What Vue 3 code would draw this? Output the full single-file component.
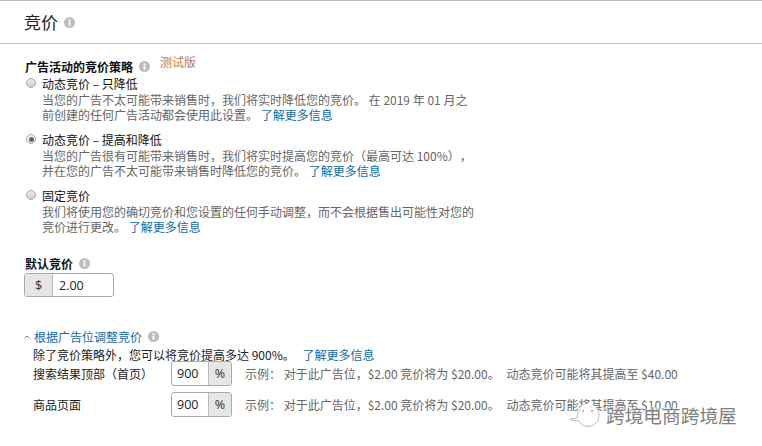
<script setup>
const strategies = [
  { id: 'a', title: '动态竞价 – 只降低', on: false, l1: '当您的广告不太可能带来销售时，我们将实时降低您的竞价。 在 2019 年 01 月之', l2: '前创建的任何广告活动都会使用此设置。' },
  { id: 'b', title: '动态竞价 – 提高和降低', on: true, l1: '当您的广告很有可能带来销售时，我们将实时提高您的竞价（最高可达 100%），', l2: '并在您的广告不太可能带来销售时降低您的竞价。' },
  { id: 'c', title: '固定竞价', on: false, l1: '我们将使用您的确切竞价和您设置的任何手动调整，而不会根据售出可能性对您的', l2: '竞价进行更改。' }
]
const rows = [
  { name: '搜索结果顶部（首页）', max: '$40.00' },
  { name: '商品页面', max: '$10.00' }
]
</script>

<template>
  <div class="page">
    <header class="head">
      <h1>竞价</h1>
      <svg class="info" viewBox="0 0 12 12"><circle cx="6" cy="6" r="6" /><rect x="5" y="5" width="2" height="4.5" fill="#fff" /><rect x="5" y="2.5" width="2" height="1.8" fill="#fff" /></svg>
    </header>

    <section class="main">
      <div class="strategy-title">
        <strong>广告活动的竞价策略</strong>
        <svg class="info" viewBox="0 0 12 12"><circle cx="6" cy="6" r="6" /><rect x="5" y="5" width="2" height="4.5" fill="#fff" /><rect x="5" y="2.5" width="2" height="1.8" fill="#fff" /></svg>
        <span class="beta">测试版</span>
      </div>

      <div v-for="s in strategies" :key="s.id" class="strategy">
        <span class="radio" :class="{ on: s.on }"></span>
        <div class="body">
          <div class="title">{{ s.title }}</div>
          <div class="desc">{{ s.l1 }}</div>
          <div class="desc">{{ s.l2 }} <a class="link">了解更多信息</a></div>
        </div>
      </div>

      <div class="default-label">
        <strong>默认竞价</strong>
        <svg class="info" viewBox="0 0 12 12"><circle cx="6" cy="6" r="6" /><rect x="5" y="5" width="2" height="4.5" fill="#fff" /><rect x="5" y="2.5" width="2" height="1.8" fill="#fff" /></svg>
      </div>
      <div class="input bid">
        <span class="addon">$</span>
        <span class="val">2.00</span>
      </div>

      <div class="adjust-head">
        <svg class="caret" viewBox="0 0 6 4"><path d="M.7 3.2 3 1l2.300 2.200" fill="none" stroke="#777" stroke-width="1" /></svg>
        <a class="link">根据广告位调整竞价</a>
        <svg class="info" viewBox="0 0 12 12"><circle cx="6" cy="6" r="6" /><rect x="5" y="5" width="2" height="4.500" fill="#fff" /><rect x="5" y="2.500" width="2" height="1.800" fill="#fff" /></svg>
      </div>
      <div class="adjust">
        <div class="intro">除了竞价策略外，您可以将竞价提高多达 900%。 <a class="link">了解更多信息</a></div>
        <div v-for="r in rows" :key="r.name" class="row">
          <span class="name">{{ r.name }}</span>
          <div class="input pct">
            <span class="val">900</span>
            <span class="addon">%</span>
          </div>
          <span class="example">示例： 对于此广告位，$2.00 竞价将为 $20.00。 <span class="dyn">动态竞价可能将其提高至 {{ r.max }}</span></span>
        </div>
      </div>
    </section>

    <div class="mark">
      <svg class="wechat" viewBox="0 0 34 26" fill="#fff" stroke="#aaa" stroke-width=".8">
        <path d="M20 1.500C14 1.500 9 7 9 13c0 1 .100 2 .3 3L2 17c2.500 1.500 5 2 8.500 1.800C12.500 22 16 24.500 20 24.500c6 0 11-5 11-11.500S26 1.500 20 1.500z" stroke="none" />
        <path d="M10.500 18.800C12.500 22 16 24.500 20 24.500c6 0 11-5 11-11.500 0-3-1-5-2.500-7M9.300 16 2 17c2.500 1.500 5 2 8.500 1.800M9.300 16C9 13 10 9 13 7" fill="none" />
        <circle cx="15" cy="9" r=".9" fill="#999" stroke="none" />
        <circle cx="24" cy="9" r=".9" fill="#999" stroke="none" />
      </svg>
      <span class="mark-text">跨境电商跨境屋</span>
    </div>
  </div>
</template>

<style>
html, body { margin: 0; background: #fff; }
</style>

<style scoped>
.page {
  position: relative;
  width: 762px;
  height: 446px;
  overflow: hidden;
  background: #fff;
  color: #111;
  font: 12px/15px "Noto Sans CJK SC", "Liberation Sans", sans-serif;
  text-spacing-trim: space-all;
  box-sizing: border-box;
  border-top: 1px solid #bbb;
}
.head {
  height: 42px;
  display: flex;
  align-items: center;
  gap: 6px;
  padding-left: 24px;
  border-bottom: 1px solid #c4c4c4;
}
h1 { margin: 0; font-size: 17px; font-weight: 400; line-height: 24px; color: #222; }
.info { width: 11px; height: 11px; fill: #bdbdbd; flex: none; }
.main { padding: 15px 0 0 25px; }
.strategy-title { display: flex; align-items: center; height: 15px; gap: 6px; margin-bottom: 2px; }
strong { font-weight: 700; }
.beta { color: #bb7a4a; position: relative; top: -5px; margin-left: 4px; }
.strategy { display: flex; gap: 6px; margin-bottom: 10px; }
.radio {
  width: 10px; height: 10px; margin: 2px 0 0 1px;
  box-sizing: border-box;
  border: 1px solid #aaa; border-radius: 50%;
  background: linear-gradient(#e8e8e8, #cfcfcf);
  flex: none; position: relative;
}
.radio.on { background: #f2f2f2; }
.radio.on::after {
  content: ""; position: absolute; inset: 1.5px; border-radius: 50%; background: #666;
}
.title { color: #111; line-height: 16px; }
.desc { color: #666; line-height: 15px; }
.link { color: #0f6aa8; }
.default-label { display: flex; align-items: center; gap: 6px; margin-top: 22px; height: 15px; }
.input {
  display: flex; border: 1px solid #aaa; border-radius: 3px; overflow: hidden;
  box-sizing: border-box; background: #fff;
}
.addon { background: #e6e6e6; display: flex; align-items: center; justify-content: center; color: #333; font-family: "Open Sans", sans-serif; font-size: 12.5px; }
.val { display: flex; align-items: center; font-family: "Open Sans", sans-serif; font-size: 12.5px; color: #222; }
.bid { width: 90px; height: 24px; margin: 2px 0 0 -1px; }
.bid .addon { width: 27px; border-right: 1px solid #bbb; }
.bid .val { padding-left: 6px; }
.adjust-head { display: flex; align-items: center; gap: 4px; margin-top: 32px; height: 15px; margin-left: -1px; }
.caret { width: 6px; height: 4px; flex: none; }
.adjust-head .info { margin-left: 2px; }
.adjust { padding-left: 8px; }
.intro { line-height: 13px; margin-top: 4px; color: #222; }
.intro .link { margin-left: 5px; }
.row { display: flex; align-items: center; height: 25px; margin-bottom: 6px; }
.name { width: 138px; flex: none; color: #222; }
.pct { width: 61px; height: 25px; }
.pct .val { width: 36px; padding-left: 5px; box-sizing: border-box; }
.pct .addon { flex: 1; border-left: 1px solid #bbb; }
.example { margin-left: 13px; color: #666; white-space: nowrap; }
.dyn { margin-left: 4px; }
.mark { position: absolute; left: 568px; top: 401px; display: flex; align-items: center; gap: 4px; }
.wechat { width: 34px; height: 26px; }
.mark-text { font-size: 18.7px; color: #808080; line-height: 22px; text-shadow: 0 0 2px #fff, 0 0 2px #fff, 0 0 3px #fff; }
</style>
